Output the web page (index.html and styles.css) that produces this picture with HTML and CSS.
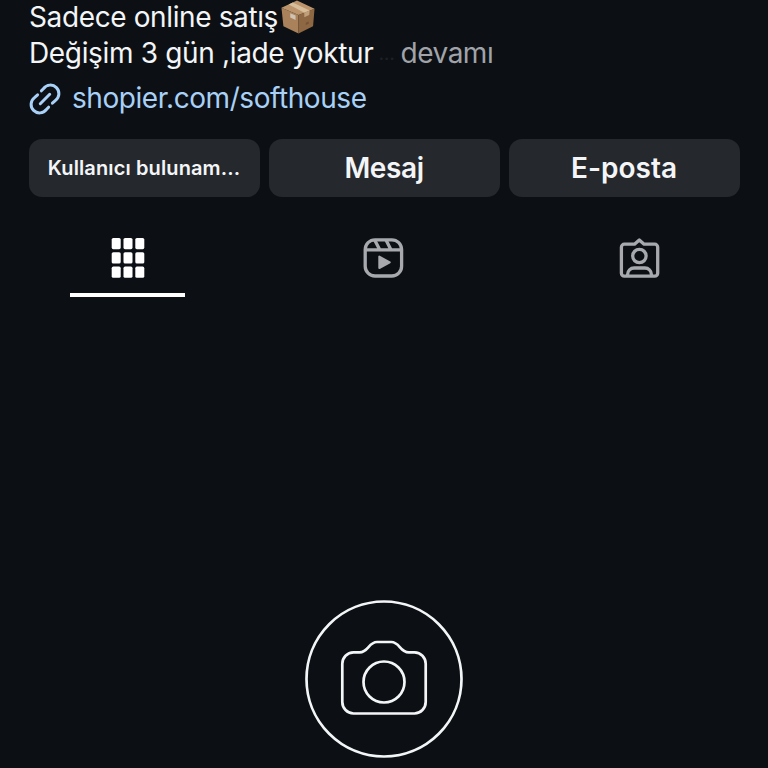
FILE: index.html
```html
<!DOCTYPE html>
<html lang="tr">
<head>
    <meta charset="UTF-8">
    <meta name="viewport" content="width=device-width, initial-scale=1.0">
    <title>softhouse</title>
    <link rel="stylesheet" href="styles.css">
</head>
<body>
    <main class="profile">
        <section class="bio">
            <p class="bio-line">
                <span class="bio-first">Sadece online satış</span>
                <svg class="package" viewBox="0 0 36 36" aria-hidden="true">
                    <path d="M1 8 18.5 15.5 18.5 34.5 3 27Z" fill="#a9825b"/>
                    <path d="M18.5 15.5 35 9 33.5 27 18.5 34.5Z" fill="#8e6743"/>
                    <path d="M1 8 17 0.5 35 9 18.5 15.5Z" fill="#bb946b"/>
                    <path d="M8.5 4.5 12.5 2.6 30 10.8 24.5 13.1Z" fill="#d8bd9b"/>
                    <path d="M24.5 13.1 30 10.8 29.5 15.5 24.5 17.8Z" fill="#c0a07a"/>
                    <path d="M10 13.5 15.5 16 15.5 20.5 10 18Z" fill="#d0c3b2"/>
                    <path d="M26 23.5 29 22.2 29 24.5 26 25.8Z" fill="#785236"/>
                </svg>
            </p>
            <p class="bio-line">
                <span class="bio-second">Değişim 3 gün ,iade yoktur</span>
                <span class="dots">...</span>
                <span class="more">devamı</span>
            </p>
            <a class="bio-link" href="#">
                <svg class="link-icon" viewBox="0 0 32 32" aria-hidden="true">
                    <path d="M12.4 7.8 14.6 5.5A8.5 8.5 0 1 1 26.5 17.4L23.4 20.2M19.6 24.2 17.4 26.5A8.5 8.5 0 1 1 5.5 14.6L8.6 11.8M11.3 20.7 20.7 11.3"/>
                </svg>
                <span>shopier.com/softhouse</span>
            </a>
        </section>

        <div class="actions">
            <button class="action action-small">Kullanıcı bulunam...</button>
            <button class="action action-message">Mesaj</button>
            <button class="action action-mail">E-posta</button>
        </div>

        <nav class="tabs">
            <button class="tab active" aria-label="Gönderiler">
                <svg class="grid-icon" viewBox="0 0 44 44" aria-hidden="true">
                    <rect x="5.7" y="2" width="9" height="11.2" rx="1.6"/>
                    <rect x="17.5" y="2" width="9" height="11.2" rx="1.6"/>
                    <rect x="29.3" y="2" width="9" height="11.2" rx="1.6"/>
                    <rect x="5.7" y="16.2" width="9" height="11.4" rx="1.6"/>
                    <rect x="17.5" y="16.2" width="9" height="11.4" rx="1.6"/>
                    <rect x="29.3" y="16.2" width="9" height="11.4" rx="1.6"/>
                    <rect x="5.7" y="30.6" width="9" height="11.2" rx="1.6"/>
                    <rect x="17.5" y="30.6" width="9" height="11.2" rx="1.6"/>
                    <rect x="29.3" y="30.6" width="9" height="11.2" rx="1.6"/>
                </svg>
            </button>
            <button class="tab" aria-label="Reels">
                <svg class="outline-icon" viewBox="0 0 44 44" aria-hidden="true">
                    <rect x="3.2" y="3.8" width="36.4" height="36.2" rx="9.8"/>
                    <path d="M3.5 13.9H39.4M12.8 4.2 17.6 13.4M24 4 28.8 13.4"/>
                    <path class="solid" d="M17.3 20.6V32L27.8 26.3Z"/>
                </svg>
            </button>
            <button class="tab" aria-label="Etiketlenenler">
                <svg class="outline-icon" viewBox="0 0 44 44" aria-hidden="true">
                    <path d="M6.4 8.2H16.5L21.3 4 26.1 8.2H36.7A3 3 0 0 1 39.7 11.2V37.2A3 3 0 0 1 36.7 40.2H6.4A3 3 0 0 1 3.4 37.2V11.2A3 3 0 0 1 6.4 8.2Z"/>
                    <circle cx="21.4" cy="20" r="6.7"/>
                    <path d="M9.6 40V38.5A6.5 6.5 0 0 1 16.1 32H26.9A6.5 6.5 0 0 1 33.4 38.5V40"/>
                </svg>
            </button>
        </nav>

        <section class="empty">
            <svg class="camera" viewBox="0 0 160 160" aria-hidden="true">
                <circle cx="80" cy="80" r="77.5"/>
                <path d="M49.5 53.3H55.5C64.5 53.3 64.5 43 73 43H87.3C95.8 43 95.8 53.3 104.8 53.3H110.5A11.5 11.5 0 0 1 121.7 64.8V103A11.5 11.5 0 0 1 110.5 114.5H49.5A11.5 11.5 0 0 1 38.3 103V64.8A11.5 11.5 0 0 1 49.5 53.3Z"/>
                <circle cx="80" cy="83" r="20.5"/>
            </svg>
        </section>
    </main>
</body>
</html>
```

FILE: styles.css
```css
:root {
    --background: #0c1014;
    --surface: #25282d;
    --text: #f3f5f7;
    --muted: #a0a3a9;
    --link: #a9d0f7;
}

* {
    box-sizing: border-box;
}

body {
    margin: 0;
    background: var(--background);
    color: var(--text);
    font-family: Inter, "Liberation Sans", sans-serif;
}

.profile {
    height: 768px;
    overflow: hidden;
}

/* Bio */
.bio {
    height: 139px;
    padding: 0 29px;
    font-size: 28px;
    letter-spacing: -0.38px;
}

.bio-line {
    display: flex;
    align-items: center;
    height: 38px;
    margin: 0;
    line-height: 34px;
    white-space: pre;
}

.bio-line:first-child {
    height: 34px;
}

.bio-second {
    letter-spacing: -0.34px;
}

.package {
    width: 36px;
    height: 35px;
    margin-left: 2px;
}

.dots {
    margin-left: 5px;
    color: #1d2126;
    font-size: 20px;
}

.more {
    margin-left: 6px;
    color: var(--muted);
    letter-spacing: -0.5px;
}

.bio-link {
    display: flex;
    align-items: center;
    gap: 11px;
    height: 52px;
    color: var(--link);
    letter-spacing: -0.44px;
    text-decoration: none;
}

.link-icon {
    width: 32px;
    height: 32px;
    margin-top: 2px;
    fill: none;
    stroke: var(--link);
    stroke-width: 3;
    stroke-linecap: round;
}

/* Buttons */
.actions {
    display: grid;
    grid-template-columns: repeat(3, 1fr);
    gap: 9px;
    padding: 0 28.5px;
}

.action {
    height: 58px;
    padding: 0;
    border: 0;
    border-radius: 13px;
    background: var(--surface);
    color: var(--text);
    font-family: inherit;
    font-size: 28px;
    font-weight: 600;
    white-space: nowrap;
}

.action-small {
    font-size: 20px;
    letter-spacing: 0.12px;
}

.action-message {
    letter-spacing: -0.4px;
}

/* Tabs */
.tabs {
    display: grid;
    grid-template-columns: repeat(3, 1fr);
    height: 100px;
    padding-top: 39px;
}

.tab {
    display: flex;
    flex-direction: column;
    align-items: center;
    padding: 0;
    border: 0;
    background: none;
}

.tab svg {
    width: 44px;
    height: 44px;
}

.tab.active::after {
    content: "";
    width: 115px;
    height: 4px;
    margin: 13px 1px 0 0;
    background: #fff;
}

.grid-icon {
    fill: #fff;
}

.outline-icon {
    fill: none;
    stroke: #a7a9af;
    stroke-width: 3.3;
    stroke-linejoin: round;
}

.outline-icon .solid {
    fill: #a7a9af;
    stroke-width: 2;
}

/* Empty state */
.empty {
    display: flex;
    justify-content: center;
    padding-top: 301px;
}

.camera {
    width: 160px;
    height: 160px;
    margin-top: 0.5px;
    fill: none;
    stroke: var(--text);
    stroke-width: 2.7;
}
```
